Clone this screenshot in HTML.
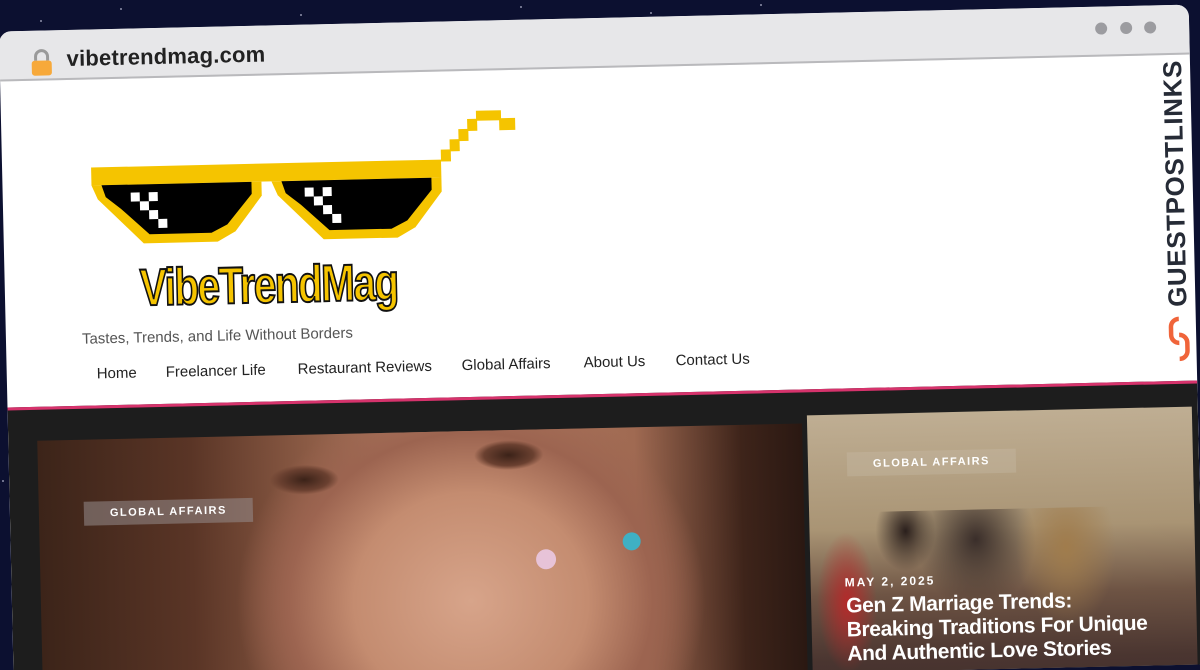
<!DOCTYPE html>
<html><head><meta charset="utf-8"><style>
*{margin:0;padding:0;box-sizing:border-box}
html,body{width:1200px;height:670px;overflow:hidden}
body{background:#0c1030;font-family:"Liberation Sans",sans-serif;position:relative}
.star{position:absolute;width:2px;height:2px;background:#c8cbe0;border-radius:1px;opacity:.7}
#f{position:absolute;left:6px;top:18px;width:1190px;height:660px;transform:rotate(-1.3deg);transform-origin:594px 317px;background:#fff;border-radius:12px 12px 0 0;overflow:hidden}
.a{position:absolute}
#bar{left:0;top:0;width:1190px;height:50px;background:#e7e7e9;border-bottom:2px solid #b9b9bc}
.dot{width:12px;height:12px;border-radius:6px;background:#9c9ca0;top:16px}
.nav{top:336px;font-size:15px;color:#222;white-space:nowrap}
#dark{left:0;top:376px;width:1190px;height:400px;background:#1d1d1d;border-top:3px solid #d6336c}
.pill{background:rgba(150,140,140,.55);color:#fff;font-size:11px;font-weight:bold;letter-spacing:1.5px;padding:6px 26px}
h2{font-size:21px;line-height:24px;color:#fff;font-weight:bold;letter-spacing:-.4px;white-space:nowrap}
</style></head><body>
<div class="star" style="left:120px;top:8px"></div><div class="star" style="left:300px;top:14px"></div><div class="star" style="left:520px;top:6px"></div><div class="star" style="left:760px;top:4px"></div><div class="star" style="left:40px;top:20px"></div><div class="star" style="left:650px;top:12px"></div><div class="star" style="left:3px;top:200px"></div><div class="star" style="left:2px;top:480px"></div>
<div id="f">
 <div class="a" id="bar"></div>
 <svg class="a" style="left:30px;top:18px" width="24" height="28" viewBox="0 0 24 28"><path d="M6 12V8a6 6 0 0 1 12 0v4" fill="none" stroke="#9a9a9a" stroke-width="3"/><rect x="2" y="12" width="20" height="15" rx="3" fill="#f7a93a"/></svg>
 <div class="a" style="left:67px;top:16px;font-size:22px;font-weight:bold;color:#222;letter-spacing:.2px">vibetrendmag.com</div>
 <div class="a dot" style="left:1096px"></div><div class="a dot" style="left:1121px"></div><div class="a dot" style="left:1145px"></div>
 <svg class="a" style="left:80px;top:82px" width="450" height="140" viewBox="80 82 450 140">
  <g fill="#f5c400">
   <rect x="89" y="138" width="350" height="18"/>
   <rect x="439" y="128" width="10" height="12"/><rect x="448" y="118" width="10" height="12"/><rect x="457" y="108" width="10" height="12"/><rect x="466" y="98" width="10" height="12"/><rect x="475" y="90" width="25" height="10"/><rect x="498" y="98" width="16" height="12"/>
   <polygon points="89,156 259,156 259,170 232,205 214,215 140,215 110,185 95,170"/>
   <polygon points="269,156 439,156 439,170 412,205 394,215 320,215 290,185 275,170"/>
  </g>
  <polygon fill="#000" points="99,156 249,156 249,168 224,198 208,206 146,206 118,180 103,168"/>
  <polygon fill="#000" points="279,156 429,156 429,168 404,198 388,206 326,206 298,180 283,168"/>
  <g fill="#fff"><rect x="128" y="164" width="9" height="9"/><rect x="137" y="173" width="9" height="9"/><rect x="146" y="182" width="9" height="9"/><rect x="146" y="164" width="9" height="9"/><rect x="155" y="191" width="9" height="9"/>
  <rect x="302" y="163" width="9" height="9"/><rect x="311" y="172" width="9" height="9"/><rect x="320" y="181" width="9" height="9"/><rect x="320" y="163" width="9" height="9"/><rect x="329" y="190" width="9" height="9"/></g>
 </svg>
 <div class="a" style="left:135px;top:234px;font-size:52px;line-height:52px;font-weight:bold;color:#f5c400;-webkit-text-stroke:2px #111;letter-spacing:-2px;transform:scaleX(.78);transform-origin:left;white-space:nowrap;font-family:'Liberation Sans Narrow','Liberation Sans',sans-serif">VibeTrendMag</div>
 <div class="a" style="left:76px;top:301px;font-size:15px;color:#555">Tastes, Trends, and Life Without Borders</div>
 <div class="a nav" style="left:90px">Home</div><div class="a nav" style="left:159px">Freelancer Life</div><div class="a nav" style="left:291px">Restaurant Reviews</div><div class="a nav" style="left:455px">Global Affairs</div><div class="a nav" style="left:577px">About Us</div><div class="a nav" style="left:669px">Contact Us</div>
 <div class="a" style="left:1158px;top:302px;transform:rotate(-90deg);transform-origin:left top;font-size:26px;line-height:28px;font-weight:bold;color:#262b36;white-space:nowrap;letter-spacing:.6px">GUESTPOSTLINKS</div>
 <svg class="a" style="left:1160px;top:310px" width="26" height="50" viewBox="0 0 26 50"><path d="M13 4a8 8 0 0 0-8 8v8a8 8 0 0 0 8 8M13 20a8 8 0 0 1 8 8v8a8 8 0 0 1-8 8" fill="none" stroke="#f0643a" stroke-width="4.5"/></svg>
 <div class="a" id="dark"></div>
 <div class="a" style="left:29px;top:410px;width:765px;height:320px;background:radial-gradient(ellipse 260px 240px at 430px 170px,#d7a48a 0%,#c48c70 45%,#9c6450 70%,transparent 90%),linear-gradient(90deg,#3c2419 0%,#5a3526 20%,#8a5a44 35%,#b47e64 50%,#a06a52 78%,#3e241a 92%,#2a1812 100%)"></div>
 <div class="a" style="left:260px;top:440px;width:70px;height:30px;border-radius:50%;background:radial-gradient(#3b2218,#6a4030 50%,transparent 70%)"></div>
 <div class="a" style="left:465px;top:420px;width:70px;height:30px;border-radius:50%;background:radial-gradient(#3b2218,#6a4030 50%,transparent 70%)"></div>
 <div class="a" style="left:525px;top:530px;width:20px;height:20px;border-radius:50%;background:#e7c3d8"></div>
 <div class="a" style="left:612px;top:515px;width:18px;height:18px;border-radius:50%;background:#3fb0c3"></div>
 <div class="a pill" style="left:74px;top:472px">GLOBAL AFFAIRS</div>
 <div class="a" style="left:799px;top:402px;width:385px;height:330px;background:linear-gradient(180deg,#bfae93 0%,#a99474 35%,#6e5444 55%,#4a3530 75%,#3a2a28 100%)"></div>
 <div class="a" style="left:805px;top:500px;width:380px;height:170px;background:radial-gradient(ellipse 30px 70px at 30px 90px,#b42a2a,transparent),radial-gradient(ellipse 50px 80px at 250px 40px,#a07c4c,transparent),radial-gradient(ellipse 60px 70px at 160px 30px,#3a2e2a,transparent),radial-gradient(ellipse 30px 40px at 90px 20px,#2a1f1c,transparent)"></div>
 <div class="a pill" style="left:838px;top:440px;background:rgba(200,190,170,.35)">GLOBAL AFFAIRS</div>
 <div class="a" style="left:833px;top:563px;font-size:12px;font-weight:bold;color:#fff;letter-spacing:2px">MAY 2, 2025</div>
 <h2 class="a" style="left:834px;top:582px">Gen Z Marriage Trends:<br>Breaking Traditions For Unique<br>And Authentic Love Stories</h2>
</div>
</body></html>
